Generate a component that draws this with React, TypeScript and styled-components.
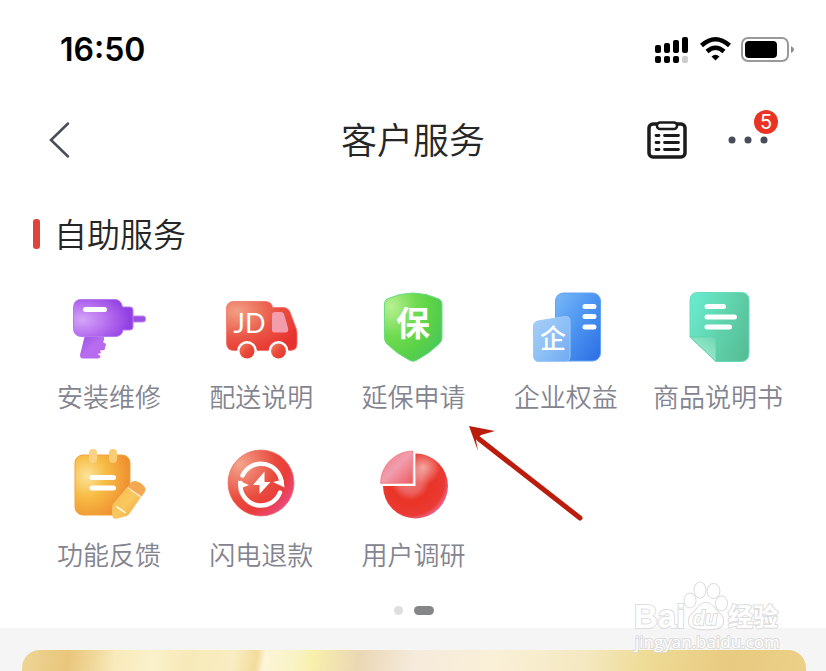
import React from "react";
import styled, { createGlobalStyle } from "styled-components";

const cjk = `"Noto Sans CJK SC", "Noto Sans", sans-serif`;

const GlobalStyle = createGlobalStyle`
  * { box-sizing: border-box; }
  body { margin: 0; background: #f5f5f5; font-family: ${cjk}; color: #262626; }
  button { border: 0; padding: 0; background: none; font: inherit; color: inherit; cursor: pointer; }
  svg { display: block; }
`;

const Page = styled.div`
  position: relative;
  min-height: 100vh;
  display: flex;
  flex-direction: column;
  overflow: hidden;
`;

const Panel = styled.div`
  background: #fff;
  padding-bottom: 8px;
`;

const StatusBar = styled.div`
  height: 100px;
  padding: 0 32px 0 60px;
  display: flex;
  align-items: center;
  justify-content: space-between;
`;

const Clock = styled.time`
  font: 600 32px/40px Inter, sans-serif;
  color: #000;
`;

const NavBar = styled.header`
  height: 80px;
  padding: 0 50px 0 48px;
  display: grid;
  grid-template-columns: 1fr auto 1fr;
  align-items: center;
`;

const Title = styled.h1`
  margin: 0;
  padding: 0 0 4px 2px;
  font-size: 36px;
  line-height: 52px;
  font-weight: 350;
`;

const BackButton = styled.button`
  justify-self: start;
`;

const NavActions = styled.div`
  justify-self: end;
  display: flex;
  align-items: center;
  gap: 38px;
`;

const MoreButton = styled.button`
  position: relative;
  padding: 16px 8px 16px 2px;
`;

const Badge = styled.span`
  position: absolute;
  top: -10px;
  right: -2px;
  width: 24px;
  height: 24px;
  border-radius: 12px;
  background: #eb3323;
  color: #fff;
  font: 20px/24px Inter, sans-serif;
  text-align: center;
`;

const SectionHeading = styled.h2`
  margin: 18px 0 0;
  padding-left: 33px;
  display: flex;
  align-items: center;
  gap: 14px;
  font-size: 33px;
  line-height: 70px;
  font-weight: 350;

  &::before {
    content: "";
    width: 7px;
    height: 30px;
    margin-top: 2px;
    border-radius: 3px;
    background: #e0433b;
  }
`;

const ServiceArea = styled.section`
  position: relative;
  padding: 19px 32px 0 33px;
`;

const ServiceGrid = styled.div`
  display: grid;
  grid-template-columns: repeat(5, 1fr);
  row-gap: 30px;
`;

const Service = styled.button`
  display: flex;
  flex-direction: column;
  align-items: center;
  gap: 10px;
  color: #83848f;
  font-size: 26px;
  line-height: 38px;
  font-weight: 350;
  white-space: nowrap;
`;

const Pager = styled.div`
  margin-top: 27px;
  height: 20px;
  display: flex;
  justify-content: center;
  align-items: center;
  gap: 11px;
`;

const PageDot = styled.button<{ $active?: boolean }>`
  width: ${(p) => (p.$active ? 20 : 9)}px;
  height: 9px;
  border-radius: 5px;
  background: ${(p) => (p.$active ? "#858688" : "#dedede")};
`;

const Pointer = styled.svg`
  position: absolute;
  left: 465px;
  top: 158px;
  pointer-events: none;
`;

const Banner = styled.div`
  flex: 1;
  min-height: 20px;
  margin: 22px 20px 0 22px;
  border-radius: 18px 18px 0 0;
  overflow: hidden;
  background: linear-gradient(100deg, #eed596 0, #e9c67c 6%, #efd698 9%, #f8eabb 12%, #faf1cb 17%, #f7e9b8 21%, #f8edc3 27%, #f2dc9c 30%,
    #fcf5d8 31%, #f9f3c4 35%, #f8f0ac 37%, #ead7b4 43%, #f5eadc 50%, #faf0d8 60%, #f4e8c0 72%, #eedc98 79%, #e8ca80 90%, #ebd087 100%);
`;

const Watermark = styled.svg`
  position: absolute;
  right: 42px;
  top: 578px;
  pointer-events: none;
`;

type Stops = [string, string, string];

const Tint = ({ id, stops }: { id: string; stops: Stops }) => (
  <linearGradient id={id} x1="0" y1="0" x2="1" y2="1">
    <stop offset="0" stopColor={stops[0]} />
    <stop offset="0.5" stopColor={stops[1]} />
    <stop offset="1" stopColor={stops[2]} />
  </linearGradient>
);

const Icon = ({ children }: { children: React.ReactNode }) => (
  <svg width="80" height="80" viewBox="0 0 80 80" aria-hidden="true">
    {children}
  </svg>
);

const DrillIcon = () => (
  <Icon>
    <defs>
      <Tint id="drill" stops={["#9a4fe6", "#b86cf0", "#b566ee"]} />
      <radialGradient id="drillBody" cx="0.15" cy="0.55" r="0.8">
        <stop offset="0" stopColor="#d3a4f8" />
        <stop offset="0.5" stopColor="#b871ef" />
        <stop offset="1" stopColor="#9140e1" />
      </radialGradient>
    </defs>
    <path d="M16 48H35V53L34 55L37 57L35.500 63L31 63.500L32 66L28.500 67L31.500 69Q31 71.500 29 71.500H14Q11 71.500 11 68Z" fill="url(#drill)" />
    <rect x="60" y="29" width="16.500" height="6" rx="2.500" fill="#9c4fe5" stroke="#bd87ef" />
    <path d="M12 12.500H46Q52 12.500 53.500 20H61Q64 20 64 23V40Q64 43 61 43H54Q53 49.500 46 49.500H13Q4.500 49.500 4.500 41V21Q4.500 12.500 12 12.500Z" fill="url(#drillBody)" stroke="#b879ef" />
    <rect x="14" y="20" width="24" height="5" rx="2.500" fill="#fff" />
  </Icon>
);

const TruckIcon = () => (
  <Icon>
    <defs>
      <radialGradient id="truck" cx="0.15" cy="0.2" r="0.95">
        <stop offset="0" stopColor="#f1a084" />
        <stop offset="0.55" stopColor="#ea5747" />
        <stop offset="1" stopColor="#e8322f" />
      </radialGradient>
      <Tint id="wheel" stops={["#f0836c", "#ea4a39", "#e63331"]} />
    </defs>
    <path d="M13 14.500H44Q51 14.500 51.500 20.500H62Q67 20.500 69 25L75 41Q76 43 76 46V57Q76 63.500 69 63.500H13Q5.500 63.500 5.500 56V22Q5.500 14.500 13 14.500Z" fill="url(#truck)" stroke="#ef7468" strokeWidth="0.800" />
    <path d="M54 25H60Q62 25 63 27L67 41Q68 45.500 64 45.500H54Q51 45.500 51 43V28Q51 25 54 25Z" fill="#f29cac" />
    <path d="M16 64a10 10 0 0 1 20 0M47.500 64a10 10 0 0 1 20 0" fill="#fff" />
    <circle cx="26" cy="64" r="7.500" fill="url(#wheel)" />
    <circle cx="57.500" cy="64" r="7.500" fill="url(#wheel)" />
    <text x="28.500" y="46" textAnchor="middle" fill="#fff" fontFamily="Lato, sans-serif" fontSize="27" fontWeight="400">JD</text>
  </Icon>
);

const ShieldIcon = () => (
  <Icon>
    <defs>
      <radialGradient id="shield" cx="0.12" cy="0.2" r="0.95">
        <stop offset="0" stopColor="#b8f092" />
        <stop offset="0.45" stopColor="#70db51" />
        <stop offset="0.75" stopColor="#5bd247" />
        <stop offset="1" stopColor="#4dc957" />
      </radialGradient>
    </defs>
    <path d="M14 12Q40 0 66 12Q69 13.500 69 17V51Q69 54 66.500 56.500Q56 67 43 73.500Q40 75 37 73.500Q24 67 13.500 56.500Q11.500 54 11.500 51V17Q11.500 13.500 14 12Z" fill="url(#shield)" stroke="#6bdc83" />
    <text x="40" y="49" textAnchor="middle" fill="#fff" fontFamily={cjk} fontSize="34" fontWeight="700">保</text>
  </Icon>
);

const CompanyIcon = () => (
  <Icon>
    <defs>
      <Tint id="tower" stops={["#79b8f8", "#4a93f0", "#2c6de4"]} />
      <Tint id="annex" stops={["#a9cef8", "#8fc1f5", "#6fa9f2"]} />
    </defs>
    <rect x="29.500" y="6" width="45" height="68" rx="8" fill="url(#tower)" stroke="#62a2f2" />
    <path d="M12 34L39 29.500Q44 29 44 34V69Q44 74.500 39 74.500H13Q7.500 74.500 7.500 69V39Q7.500 35 12 34Z" fill="url(#annex)" stroke="#9dcaf8" />
    <path d="M59 19.500H68M59 29.500H68M59 40H68" stroke="#fff" strokeWidth="5" strokeLinecap="round" />
    <text x="27" y="61" textAnchor="middle" fill="#fff" fontFamily={cjk} fontSize="26" fontWeight="500">企</text>
  </Icon>
);

const ManualIcon = () => (
  <Icon>
    <defs>
      <linearGradient id="manual" x1="0" y1="0.3" x2="1" y2="0.8">
        <stop offset="0" stopColor="#68e8cb" />
        <stop offset="0.5" stopColor="#60d3ac" />
        <stop offset="1" stopColor="#56bd97" />
      </linearGradient>
      <linearGradient id="manualFold" x1="0.9" y1="0" x2="0.3" y2="0.8">
        <stop offset="0" stopColor="#72d9b3" />
        <stop offset="1" stopColor="#9fecd0" />
      </linearGradient>
    </defs>
    <path d="M20 5.500H63Q71 5.500 71 13.500V66Q71 74.500 63 74.500H38L12 50V13.500Q12 5.500 20 5.500Z" fill="url(#manual)" stroke="#65dcb9" />
    <path d="M12 50H33Q38 50 38 55V74.500Z" fill="url(#manualFold)" stroke="#62cfad" strokeWidth="0.800" />
    <path d="M29 19.500H45.500M29 30H56.500M29 40H51.500" stroke="#fff" strokeWidth="5" strokeLinecap="round" />
  </Icon>
);

const FeedbackIcon = () => (
  <Icon>
    <defs>
      <radialGradient id="pad" cx="0.22" cy="0.35" r="0.85">
        <stop offset="0" stopColor="#fbe39c" />
        <stop offset="0.4" stopColor="#f7bd45" />
        <stop offset="1" stopColor="#ee872d" />
      </radialGradient>
      <Tint id="pencil" stops={["#f5ba48", "#f8c95f", "#f0a039"]} />
    </defs>
    <rect x="6" y="10" width="55" height="60" rx="8" fill="url(#pad)" stroke="#f3a33b" />
    <rect x="20" y="4" width="8" height="14" rx="4" fill="#f9d283" />
    <rect x="40" y="4" width="8" height="14" rx="4" fill="#f9cc76" />
    <path d="M23 32.500H44.500M23 43H44.500" stroke="#fff" strokeWidth="5" strokeLinecap="round" />
    <path d="M58 43L71.500 52.500L60 69Q59 70.500 57 71L47 73.500Q43.500 74 43.500 70.500V62Q43.500 60.500 44.500 59Z" fill="url(#pencil)" stroke="#f8ca75" strokeWidth="0.600" />
    <path d="M58.500 42L62 37.500Q63.500 35.500 66.500 36Q73 37.500 76 42.500Q77.500 45 75.500 47.500L72.500 51.500Z" fill="#f4a851" />
    <path d="M58.500 42.500L72.500 52" stroke="#fce2ad" strokeWidth="1.500" />
    <path d="M48 62L56 67.500" stroke="#fff" strokeWidth="1.500" strokeLinecap="round" />
  </Icon>
);

const RefundIcon = () => (
  <Icon>
    <defs>
      <radialGradient id="refund" cx="0.18" cy="0.22" r="0.9">
        <stop offset="0" stopColor="#f3a48d" />
        <stop offset="0.6" stopColor="#e94a3c" />
        <stop offset="0.8" stopColor="#e93d3a" />
        <stop offset="1" stopColor="#eb4779" />
      </radialGradient>
    </defs>
    <circle cx="40" cy="38" r="33" fill="url(#refund)" stroke="#ef6d61" strokeWidth="0.800" />
    <path d="M21.500 30.500A20.500 20.500 0 0 1 60.500 38M59 47.500A20.500 20.500 0 0 1 19.500 38" fill="none" stroke="#fff" strokeWidth="4.500" strokeLinecap="round" />
    <path d="M52 37L62.500 34.500L63.500 42.500ZM28 40L17 35.500L18 44Z" fill="#fff" />
    <path d="M43.500 26.500L32 40H38.500V49L49.500 37H43.500Z" fill="#fff" />
  </Icon>
);

const SurveyIcon = () => (
  <Icon>
    <defs>
      <radialGradient id="pie" cx="0.42" cy="0.42" r="0.6">
        <stop offset="0" stopColor="#ee7272" />
        <stop offset="0.3" stopColor="#ec6462" />
        <stop offset="0.5" stopColor="#e93426" />
        <stop offset="0.88" stopColor="#ea3a33" />
        <stop offset="1" stopColor="#ed6183" />
      </radialGradient>
      <radialGradient id="pieShine" cx="0.62" cy="0.22" r="0.26">
        <stop offset="0" stopColor="#f3aaa6" />
        <stop offset="1" stopColor="#f3aaa6" stopOpacity="0" />
      </radialGradient>
      <Tint id="slice" stops={["#f07981", "#f19dae", "#ec5b5d"]} />
    </defs>
    <path d="M42.500 8.500A32.500 32.500 0 1 1 10 41H42.500Z" fill="url(#pie)" />
    <path d="M42.500 8.500A32.500 32.500 0 1 1 10 41H42.500Z" fill="url(#pieShine)" />
    <path d="M39.800 6V38.300H7.500A32.500 32.500 0 0 1 39.800 6Z" fill="url(#slice)" stroke="#ef7b80" strokeWidth="0.800" />
  </Icon>
);

const services = [
  { label: "安装维修", Glyph: DrillIcon },
  { label: "配送说明", Glyph: TruckIcon },
  { label: "延保申请", Glyph: ShieldIcon },
  { label: "企业权益", Glyph: CompanyIcon },
  { label: "商品说明书", Glyph: ManualIcon },
  { label: "功能反馈", Glyph: FeedbackIcon },
  { label: "闪电退款", Glyph: RefundIcon },
  { label: "用户调研", Glyph: SurveyIcon },
];

const StatusIcons = () => (
  <svg width="140" height="30" viewBox="0 0 140 30" role="img" aria-label="信号、无线网络与电池">
    <g fill="#000">
      <rect x="1" y="10" width="6" height="8" rx="2" />
      <rect x="10" y="8" width="6" height="10" rx="2" />
      <rect x="19" y="5" width="6" height="13" rx="2" />
      <rect x="28" y="2" width="6" height="16" rx="2" />
      <rect x="1" y="21" width="6" height="7" rx="2" />
      <rect x="10" y="21" width="6" height="7" rx="2" />
      <rect x="19" y="21" width="6" height="7" rx="2" />
    </g>
    <rect x="28" y="21" width="6" height="7" rx="2" fill="#ccc" />
    <path d="M47.500 10.500Q61.500 -2 75.500 10.500M53 16.500Q61.500 9 70 16.500" fill="none" stroke="#000" strokeWidth="4.500" />
    <path d="M57.500 21.500Q61.500 18 65.500 21.500L61.500 25.500Z" fill="#000" />
    <rect x="88" y="3" width="46" height="23" rx="6" fill="none" stroke="#999" strokeWidth="2" />
    <rect x="91" y="6" width="32" height="17" rx="4" fill="#000" />
    <path d="M137 11Q140 12.500 140 14.500T137 18Z" fill="#8c8c8c" />
  </svg>
);

export default function App() {
  return (
    <Page lang="zh-CN">
      <GlobalStyle />
      <Panel>
        <StatusBar>
          <Clock>16:50</Clock>
          <StatusIcons />
        </StatusBar>
        <NavBar>
          <BackButton aria-label="返回">
            <svg width="24" height="40" viewBox="0 0 24 40">
              <path d="M20 3.500L3 20L20 36.500" fill="none" stroke="#484b58" strokeWidth="2.500" strokeLinecap="round" />
            </svg>
          </BackButton>
          <Title>客户服务</Title>
          <NavActions>
            <button aria-label="服务单">
              <svg width="42" height="40" viewBox="0 0 42 40" fill="none" stroke="#1b1b1b" strokeLinecap="round">
                <rect x="3" y="4" width="36" height="33" rx="4" strokeWidth="3.500" />
                <rect x="11" y="2.500" width="20" height="6.500" rx="3" fill="#fff" strokeWidth="2.500" />
                <path d="M10 15.500H13M10 22.500H13M10 29.500H13M18.500 15.500H32.500M18.500 22.500H32.500M18.500 29.500H32.500" strokeWidth="2.800" />
              </svg>
            </button>
            <MoreButton aria-label="更多，5 条消息">
              <svg width="40" height="8" viewBox="0 0 40 8" fill="#494c59">
                <circle cx="4" cy="4" r="3.500" />
                <circle cx="20" cy="4" r="3.500" />
                <circle cx="36" cy="4" r="3.500" />
              </svg>
              <Badge>5</Badge>
            </MoreButton>
          </NavActions>
        </NavBar>
        <SectionHeading>自助服务</SectionHeading>
        <ServiceArea>
          <ServiceGrid>
            {services.map(({ label, Glyph }) => (
              <Service key={label}>
                <Glyph />
                {label}
              </Service>
            ))}
          </ServiceGrid>
          <Pager>
            <PageDot aria-label="第 1 页" />
            <PageDot $active aria-label="第 2 页" aria-current="true" />
          </Pager>
          <Pointer width="120" height="100" viewBox="0 0 120 100" aria-hidden="true">
            <path d="M14 13L115 92" stroke="#bb1c0c" strokeWidth="5" strokeLinecap="round" />
            <path d="M4 0L30 5L16 9L11 14L13 25Z" fill="#bb1c0c" />
          </Pointer>
        </ServiceArea>
      </Panel>
      <Banner />
      <Watermark width="152" height="78" viewBox="0 0 152 78" fill="#fff" stroke="#dadada" strokeWidth="2" paintOrder="stroke" opacity="0.900" aria-hidden="true">
        <ellipse cx="58" cy="22.500" rx="5.500" ry="7" />
        <ellipse cx="68" cy="12" rx="5.500" ry="7.500" />
        <ellipse cx="81.500" cy="13" rx="6" ry="7" />
        <ellipse cx="89.500" cy="25.500" rx="5.500" ry="7" />
        <path d="M74 25C67 25 66 31 61 35C55 40 55 49 64 50.500C70 51.500 78 51.500 84 50.500C93 49 93 40 87 35C82 31 81 25 74 25Z" />
        <text x="2" y="50" fontFamily="Liberation Sans, sans-serif" fontSize="33" fontWeight="700">Bai</text>
        <text x="73" y="47" textAnchor="middle" fontFamily="Liberation Sans, sans-serif" fontSize="20" fontStyle="italic" fontWeight="700">du</text>
        <text x="96" y="48" fontFamily={cjk} fontSize="25" fontWeight="700">经验</text>
        <text x="3" y="70" fontFamily="Open Sans, sans-serif" fontSize="17" fontWeight="400">jingyan.baidu.com</text>
      </Watermark>
    </Page>
  );
}
